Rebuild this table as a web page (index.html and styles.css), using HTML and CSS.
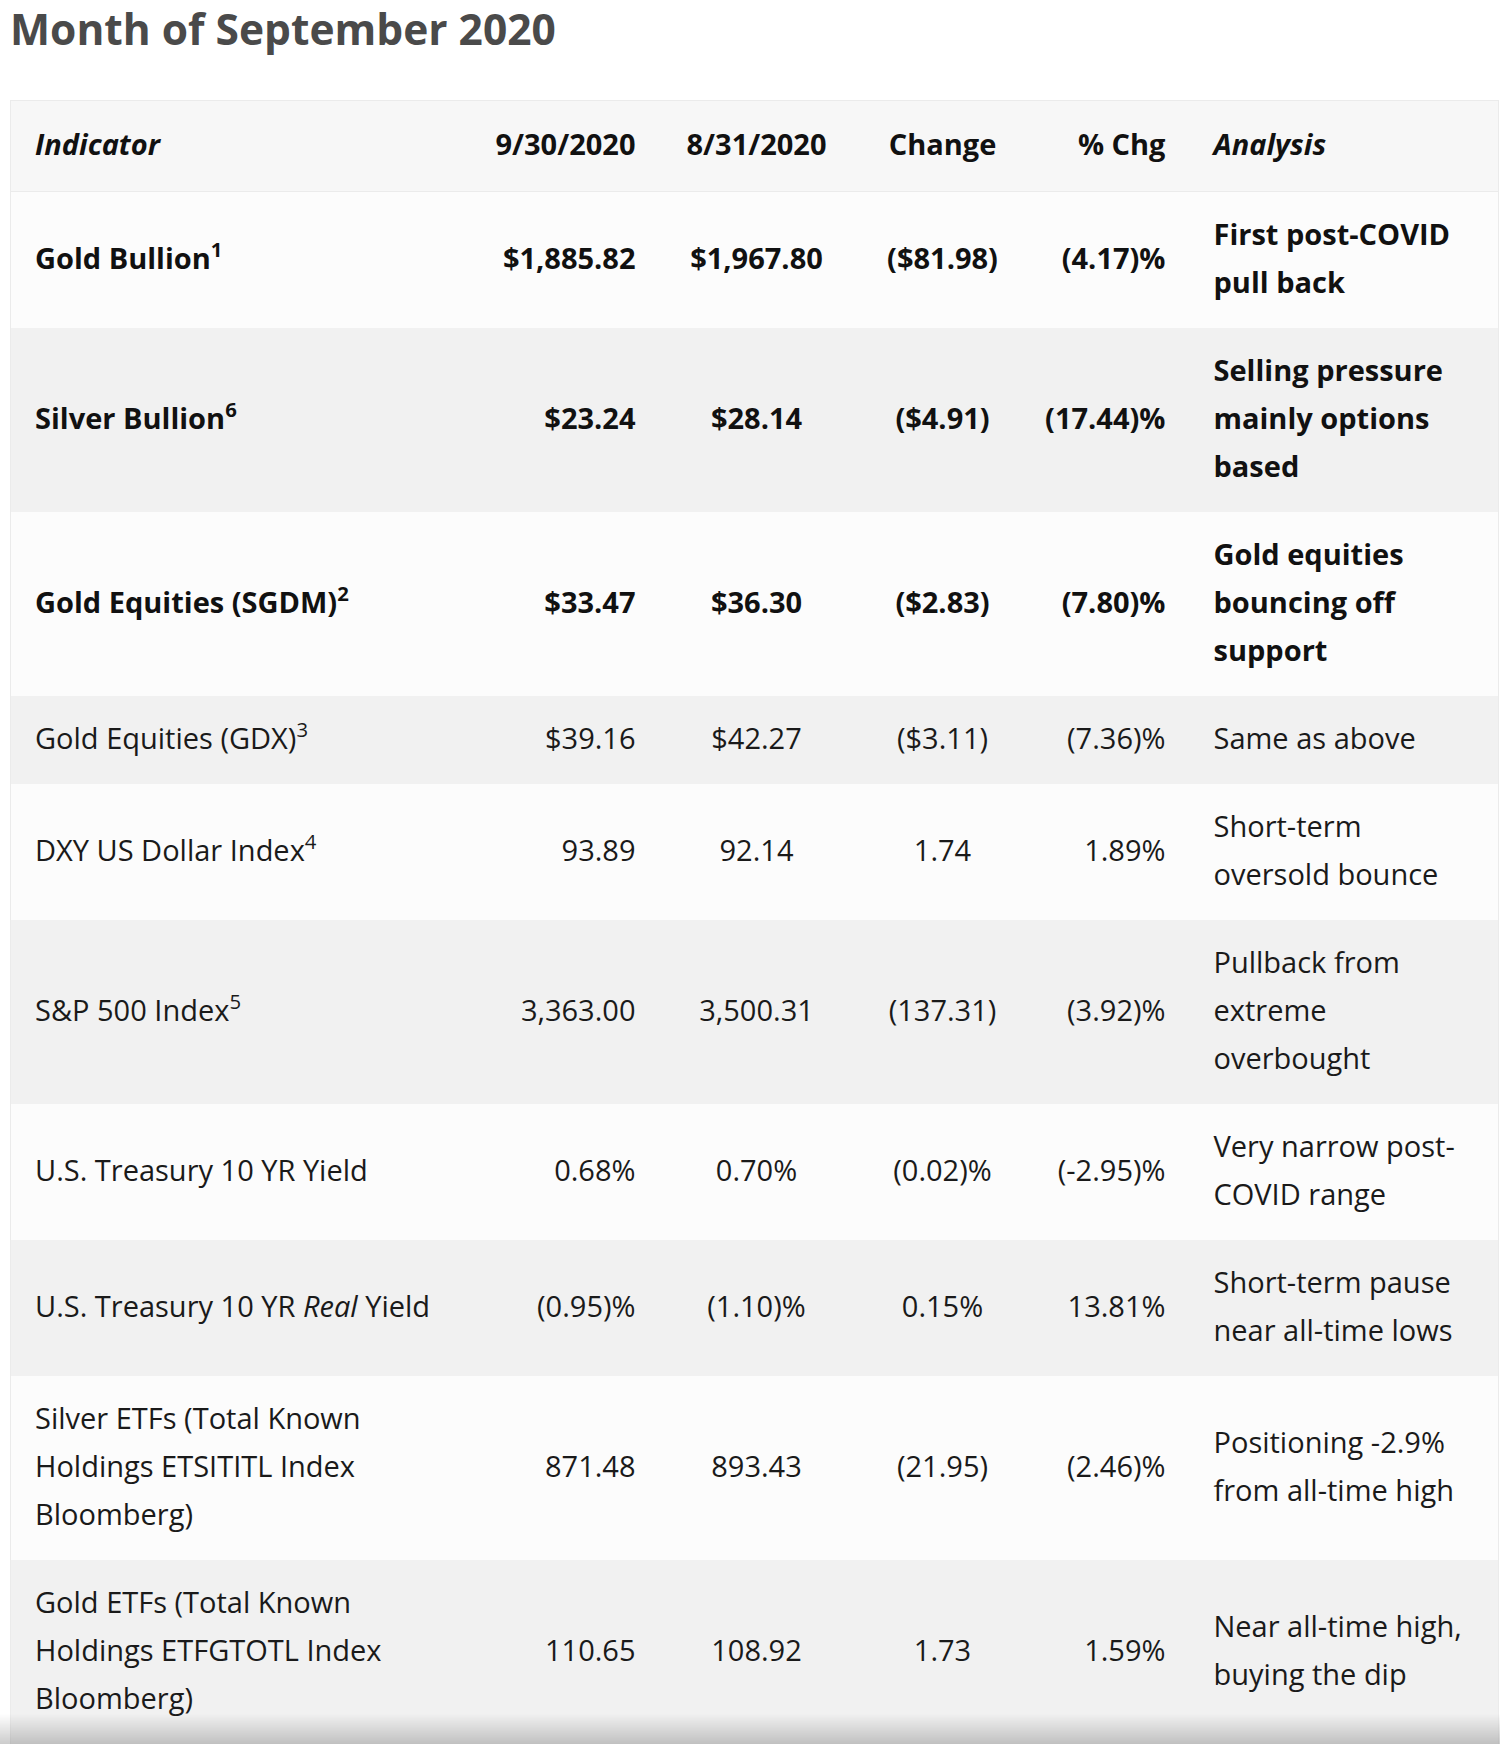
FILE: index.html
```html
<!DOCTYPE html>
<html lang="en">
<head>
<meta charset="utf-8">
<title>Month of September 2020</title>
<link rel="stylesheet" href="styles.css">
</head>
<body>
<h1 class="title">Month of September 2020</h1>
<table class="data">
  <colgroup>
    <col class="c-ind"><col class="c-d1"><col class="c-d2"><col class="c-chg"><col class="c-pct"><col class="c-an">
  </colgroup>
  <thead>
    <tr class="head">
      <th class="left"><em>Indicator</em></th>
      <th class="right">9/30/2020</th>
      <th class="center">8/31/2020</th>
      <th class="center">Change</th>
      <th class="right">% Chg</th>
      <th class="left"><em>Analysis</em></th>
    </tr>
  </thead>
  <tbody>
    <tr class="odd bold">
      <td class="left">Gold Bullion<sup>1</sup></td>
      <td class="right">$1,885.82</td>
      <td class="center">$1,967.80</td>
      <td class="center">($81.98)</td>
      <td class="right">(4.17)%</td>
      <td class="left">First post-COVID pull back</td>
    </tr>
    <tr class="even bold">
      <td class="left">Silver Bullion<sup>6</sup></td>
      <td class="right">$23.24</td>
      <td class="center">$28.14</td>
      <td class="center">($4.91)</td>
      <td class="right">(17.44)%</td>
      <td class="left">Selling pressure mainly options based</td>
    </tr>
    <tr class="odd bold">
      <td class="left">Gold Equities (SGDM)<sup>2</sup></td>
      <td class="right">$33.47</td>
      <td class="center">$36.30</td>
      <td class="center">($2.83)</td>
      <td class="right">(7.80)%</td>
      <td class="left">Gold equities bouncing off support</td>
    </tr>
    <tr class="even">
      <td class="left">Gold Equities (GDX)<sup>3</sup></td>
      <td class="right">$39.16</td>
      <td class="center">$42.27</td>
      <td class="center">($3.11)</td>
      <td class="right">(7.36)%</td>
      <td class="left">Same as above</td>
    </tr>
    <tr class="odd">
      <td class="left">DXY US Dollar Index<sup>4</sup></td>
      <td class="right">93.89</td>
      <td class="center">92.14</td>
      <td class="center">1.74</td>
      <td class="right">1.89%</td>
      <td class="left">Short-term oversold bounce</td>
    </tr>
    <tr class="even">
      <td class="left">S&amp;P 500 Index<sup>5</sup></td>
      <td class="right">3,363.00</td>
      <td class="center">3,500.31</td>
      <td class="center">(137.31)</td>
      <td class="right">(3.92)%</td>
      <td class="left">Pullback from extreme overbought</td>
    </tr>
    <tr class="odd">
      <td class="left">U.S. Treasury 10 YR Yield</td>
      <td class="right">0.68%</td>
      <td class="center">0.70%</td>
      <td class="center">(0.02)%</td>
      <td class="right">(-2.95)%</td>
      <td class="left">Very narrow post-COVID range</td>
    </tr>
    <tr class="even">
      <td class="left">U.S. Treasury 10 YR <em>Real</em> Yield</td>
      <td class="right">(0.95)%</td>
      <td class="center">(1.10)%</td>
      <td class="center">0.15%</td>
      <td class="right">13.81%</td>
      <td class="left">Short-term pause near all-time lows</td>
    </tr>
    <tr class="odd">
      <td class="left">Silver ETFs (Total Known Holdings ETSITITL Index Bloomberg)</td>
      <td class="right">871.48</td>
      <td class="center">893.43</td>
      <td class="center">(21.95)</td>
      <td class="right">(2.46)%</td>
      <td class="left">Positioning -2.9% from all-time high</td>
    </tr>
    <tr class="even">
      <td class="left">Gold ETFs (Total Known Holdings ETFGTOTL Index Bloomberg)</td>
      <td class="right">110.65</td>
      <td class="center">108.92</td>
      <td class="center">1.73</td>
      <td class="right">1.59%</td>
      <td class="left">Near all-time high, buying the dip</td>
    </tr>
  </tbody>
</table>
<div class="fade"></div>
</body>
</html>
```
FILE: styles.css
```css
html, body {
  margin: 0;
  padding: 0;
  background: #ffffff;
}
body {
  font-family: "Open Sans", "Noto Sans", sans-serif;
  color: #1a1a1a;
}
.title {
  margin: 7px 0 0 10px;
  font-size: 42.5px;
  line-height: 44px;
  font-weight: 700;
  color: #4a4a4a;
}
.data {
  margin: 49px 0 0 10px;
  width: 1488px;
  table-layout: fixed;
  border-collapse: collapse;
  border: 1px solid #ebebeb;
  font-size: 29px;
}
.c-ind { width: 451px; }
.c-d1 { width: 198px; }
.c-d2 { width: 194px; }
.c-chg { width: 178px; }
.c-pct { width: 158px; }
.c-an { width: 309px; }
.data th, .data td {
  padding: 18px 24px 22px;
  line-height: 48px;
  vertical-align: middle;
}
.data th {
  font-weight: 700;
  color: #111;
  padding-top: 19px;
  padding-bottom: 23px;
}
.data .right {
  padding-left: 8px;
}
.head {
  background: #f7f7f7;
  border-bottom: 1px solid #ebebeb;
}
.odd { background: #fcfcfc; }
.even { background: #f1f1f1; }
.bold td {
  font-weight: 700;
  color: #111;
}
.left { text-align: left; }
.right { text-align: right; }
.center { text-align: center; }
sup {
  font-size: 0.7em;
  line-height: 0;
  vertical-align: 0.6em;
}
.fade {
  position: fixed;
  left: 0;
  right: 0;
  bottom: 0;
  height: 30px;
  background: linear-gradient(to bottom, rgba(0,0,0,0), rgba(0,0,0,0.2));
  pointer-events: none;
}
```
